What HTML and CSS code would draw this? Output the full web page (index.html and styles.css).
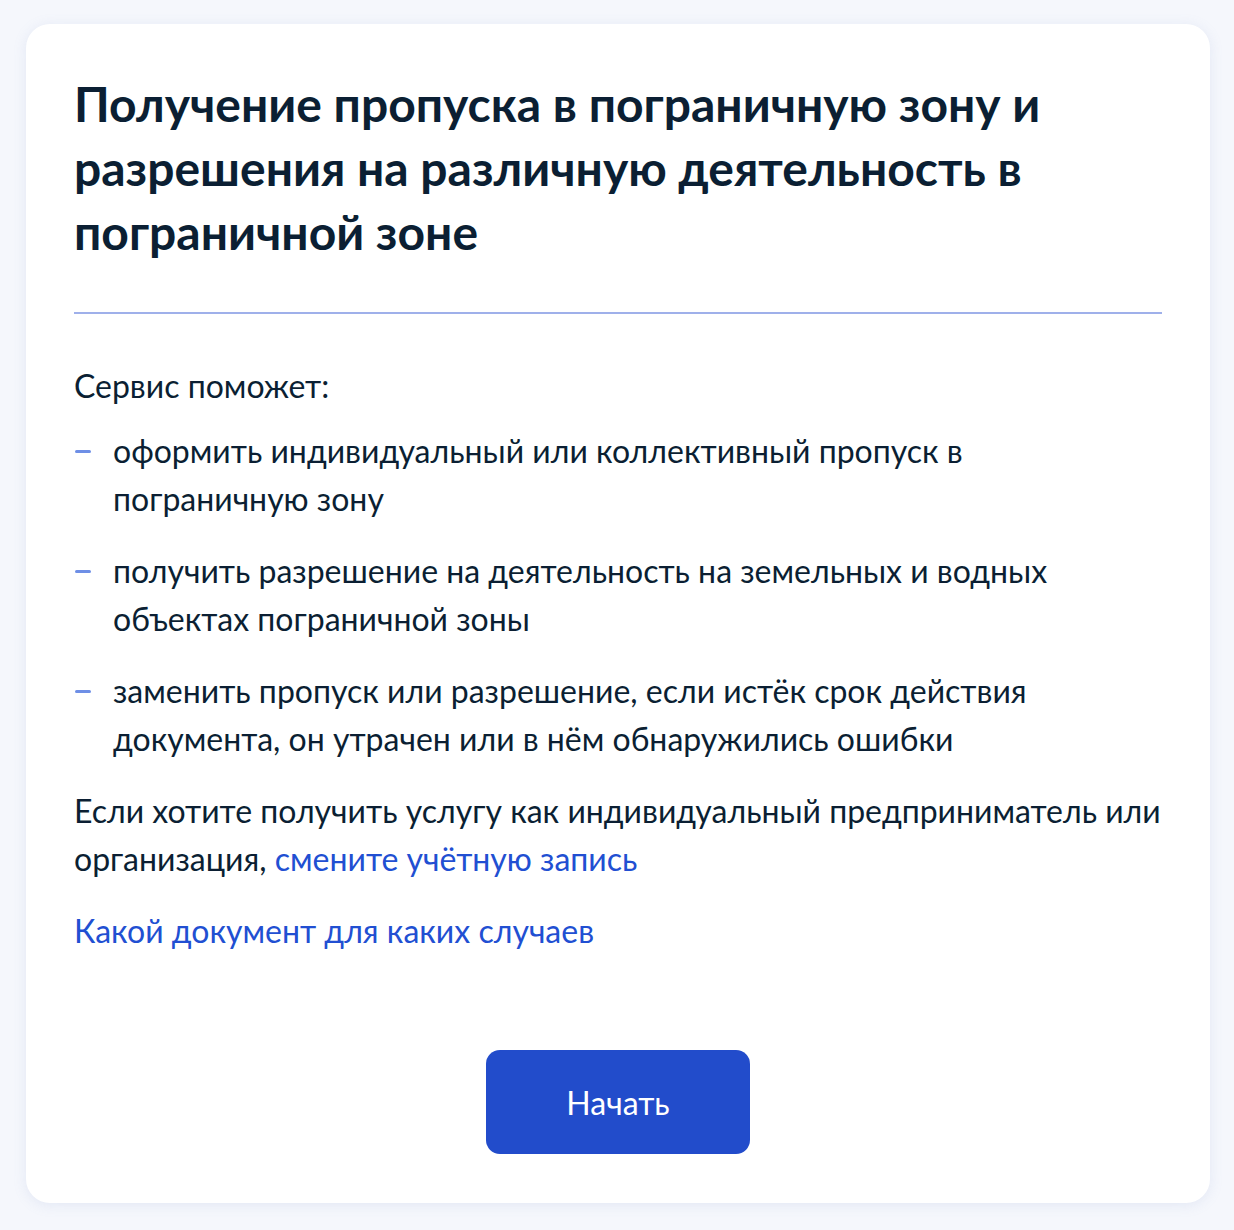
FILE: index.html
```html
<!DOCTYPE html>
<html lang="ru">
<head>
  <meta charset="UTF-8" />
  <title>Пропуск в пограничную зону</title>
  <link rel="stylesheet" href="styles.css">
</head>
<body>
  <div class="card">
    <h1 class="title">Получение пропуска в пограничную зону и разрешения на различную деятельность в пограничной зоне</h1>
    <hr class="divider">

    <p class="lead">Сервис поможет:</p>
    <ul class="list">
      <li>оформить индивидуальный или коллективный пропуск в пограничную зону</li>
      <li>получить разрешение на деятельность на земельных и водных объектах пограничной зоны</li>
      <li>заменить пропуск или разрешение, если истёк срок действия документа, он утрачен или в нём обнаружились ошибки</li>
    </ul>

    <p class="text">Если хотите получить услугу как индивидуальный предприниматель или организация, <a href="#">смените учётную запись</a></p>
    <p class="text"><a href="#">Какой документ для каких случаев</a></p>

    <div class="actions">
      <button class="btn">Начать</button>
    </div>
  </div>
</body>
</html>
```

FILE: styles.css
```css
body {
  margin: 0;
  padding: 24px 24px 28px 26px;
  background-color: #f5f7fc;
  font-family: Lato, "Noto Sans", sans-serif;
  color: #0b1f33;
}
.card {
  background: #fff;
  border-radius: 24px;
  padding: 48px 48px 49px 48px;
  box-shadow: 0 2px 14px rgba(120, 140, 200, 0.14);
}
.title {
  margin: 0;
  font-size: 48px;
  line-height: 64px;
  font-weight: 700;
}
.divider {
  border: none;
  height: 2px;
  background: #9fb0ea;
  margin: 48px 0 48px;
}
.lead {
  margin: 0 0 17px;
  font-size: 32px;
  line-height: 48px;
}
.list {
  list-style: none;
  margin: 0;
  padding: 0;
}
.list li {
  position: relative;
  padding-left: 39px;
  font-size: 32px;
  line-height: 48px;
  margin-bottom: 24px;
}
.list li::before {
  content: "";
  position: absolute;
  left: 1px;
  top: 23px;
  width: 16px;
  height: 3px;
  border-radius: 2px;
  background: #6e8fe6;
}
.text {
  margin: 0 0 24px;
  font-size: 32px;
  line-height: 48px;
}
.text a {
  color: #214fd2;
  text-decoration: none;
}
.actions {
  display: flex;
  justify-content: center;
  padding-top: 71px;
}
.btn {
  width: 264px;
  height: 104px;
  border: none;
  border-radius: 14px;
  background-color: #224ccb;
  color: #fff;
  font-family: Lato, "Noto Sans", sans-serif;
  font-size: 32px;
  cursor: pointer;
}
```
